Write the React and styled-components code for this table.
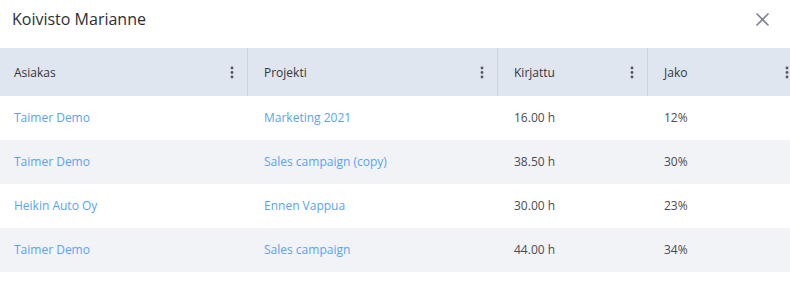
import React from 'react';
import styled, { createGlobalStyle } from 'styled-components';

const GlobalStyle = createGlobalStyle`
  body {
    margin: 0;
    background: #ffffff;
    font-family: "Open Sans", "Liberation Sans", sans-serif;
    overflow: hidden;
  }
`;

const Dialog = styled.div`
  width: 790px;
  height: 287px;
  background: #ffffff;
  overflow: hidden;
`;

const TitleBar = styled.div`
  height: 48px;
  display: flex;
  align-items: flex-start;
  justify-content: space-between;
  padding: 8px 20px 0 12px;
  box-sizing: border-box;
`;

const Title = styled.h2`
  margin: 0;
  font-size: 16px;
  font-weight: 400;
  line-height: 22px;
  color: #2d2f36;
`;

const CloseButton = styled.button`
  border: none;
  background: none;
  padding: 0;
  margin-top: 4px;
  width: 15px;
  height: 15px;
  display: flex;
  cursor: pointer;
`;

const Table = styled.div`
  width: 803px;
`;

const Row = styled.div`
  display: grid;
  grid-template-columns: 248px 250px 150px 155px;
  height: 44px;
  background: ${({ $striped }) => ($striped ? '#f2f3f7' : '#ffffff')};
`;

const HeaderRow = styled(Row)`
  height: 48px;
  background: #e0e6ef;
`;

const HeaderCell = styled.div`
  display: flex;
  align-items: center;
  justify-content: space-between;
  padding: 0 14px 0 16px;
  font-size: 12px;
  color: #34363d;
  border-left: ${({ $first }) => ($first ? 'none' : '1px solid #cdd4df')};
  margin-left: ${({ $first }) => ($first ? '0' : '-1px')};
  padding-left: ${({ $first }) => ($first ? '14px' : '16px')};
`;

const Cell = styled.div`
  display: flex;
  align-items: center;
  padding-bottom: 1px;
  padding-left: ${({ $first }) => ($first ? '14px' : '16px')};
  font-size: 12px;
  color: ${({ $link }) => ($link ? '#5ba2f2' : '#4a4c53')};
`;

const Dots = () => (
  <svg width="4" height="13" viewBox="0 0 4 13">
    <circle cx="2" cy="2" r="1.4" fill="#55575e" />
    <circle cx="2" cy="6.5" r="1.4" fill="#55575e" />
    <circle cx="2" cy="11" r="1.4" fill="#55575e" />
  </svg>
);

const columns = ['Asiakas', 'Projekti', 'Kirjattu', 'Jako'];

const rows = [
  { customer: 'Taimer Demo', project: 'Marketing 2021', hours: '16.00 h', share: '12%' },
  { customer: 'Taimer Demo', project: 'Sales campaign (copy)', hours: '38.50 h', share: '30%' },
  { customer: 'Heikin Auto Oy', project: 'Ennen Vappua', hours: '30.00 h', share: '23%' },
  { customer: 'Taimer Demo', project: 'Sales campaign', hours: '44.00 h', share: '34%' },
];

const App = () => (
  <>
    <GlobalStyle />
    <Dialog>
      <TitleBar>
        <Title>Koivisto Marianne</Title>
        <CloseButton aria-label="close">
          <svg width="15" height="15" viewBox="0 0 15 15">
            <path d="M1.5 1.5 L13.5 13.5 M13.5 1.5 L1.5 13.5" stroke="#7d8299" strokeWidth="1.6" fill="none" />
          </svg>
        </CloseButton>
      </TitleBar>
      <Table>
        <HeaderRow>
          {columns.map((col, i) => (
            <HeaderCell key={col} $first={i === 0}>
              {col}
              <Dots />
            </HeaderCell>
          ))}
        </HeaderRow>
        {rows.map((row, i) => (
          <Row key={i} $striped={i % 2 === 1}>
            <Cell $first $link>{row.customer}</Cell>
            <Cell $link>{row.project}</Cell>
            <Cell>{row.hours}</Cell>
            <Cell>{row.share}</Cell>
          </Row>
        ))}
      </Table>
    </Dialog>
  </>
);

export default App;
